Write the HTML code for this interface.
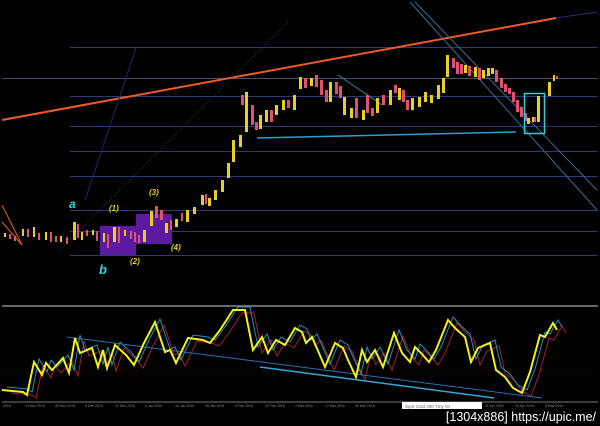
<!DOCTYPE html>
<html><head><meta charset="utf-8"><style>
html,body{margin:0;padding:0;background:#000;}
body{width:600px;height:426px;overflow:hidden;position:relative;font-family:"Liberation Sans",sans-serif;}
svg{position:absolute;left:0;top:0;}
</style></head><body>
<svg width="600" height="426" viewBox="0 0 600 426" xmlns="http://www.w3.org/2000/svg">
<rect width="600" height="426" fill="#000"/>
<!-- grid -->
<g stroke="#2c3a78" stroke-width="1">
<line x1="70" y1="47.5" x2="598" y2="47.5"/>
<line x1="70" y1="96.5" x2="598" y2="96.5"/>
<line x1="70" y1="126.5" x2="598" y2="126.5"/>
<line x1="70" y1="151.5" x2="598" y2="151.5"/>
<line x1="70" y1="176.5" x2="598" y2="176.5"/>
<line x1="70" y1="210.5" x2="598" y2="210.5"/>
<line x1="70" y1="231.5" x2="598" y2="231.5"/>
<line x1="70" y1="255.5" x2="598" y2="255.5"/>
</g>
<line x1="2" y1="78.5" x2="598" y2="78.5" stroke="#4a4f68"/>
<!-- trend lines -->
<line x1="2" y1="120" x2="556" y2="18" stroke="#f05a28" stroke-width="2"/>
<line x1="556" y1="18" x2="597" y2="12" stroke="#2a2a80" stroke-width="1"/>
<line x1="85" y1="200" x2="136" y2="48" stroke="#1a2a70" stroke-width="1"/>
<line x1="60" y1="250" x2="288" y2="22" stroke="#3a3a5a" stroke-width="1" stroke-dasharray="1,2"/>
<line x1="257" y1="138" x2="516" y2="132" stroke="#2aa0d0" stroke-width="1.5"/>
<line x1="338" y1="75" x2="382" y2="105" stroke="#3a80a0" stroke-width="1"/>
<line x1="410" y1="2" x2="597" y2="210" stroke="#3a6a90" stroke-width="1"/>
<line x1="415" y1="2" x2="597" y2="190" stroke="#3a6a90" stroke-width="1"/>
<line x1="2" y1="205" x2="22" y2="245" stroke="#e06020"/>
<line x1="2" y1="222" x2="22" y2="245" stroke="#e06020"/>
<!-- purple boxes -->
<rect x="100" y="226" width="36" height="29" fill="#5c1aa0"/>
<rect x="136" y="214" width="36" height="30" fill="#5c1aa0"/>
<!-- candles -->
<g id="c">
<g fill="#e8d020">
<rect x="4" y="233" width="2" height="4"/><rect x="22" y="229" width="2" height="7"/><rect x="33" y="227" width="2" height="10"/><rect x="45" y="232" width="2" height="8"/><rect x="60" y="236" width="2" height="6"/><rect x="73" y="222" width="3" height="18"/><rect x="81" y="232" width="2" height="8"/><rect x="92" y="230" width="2" height="5"/><rect x="103" y="233" width="2" height="9"/><rect x="113" y="227" width="3" height="15"/><rect x="124" y="230" width="2" height="6"/><rect x="143" y="230" width="3" height="12"/><rect x="150" y="211" width="3" height="15"/><rect x="165" y="223" width="3" height="10"/><rect x="175" y="219" width="3" height="8"/><rect x="186" y="210" width="3" height="12"/><rect x="193" y="207" width="3" height="7"/><rect x="201" y="195" width="3" height="10"/><rect x="208" y="198" width="3" height="8"/><rect x="214" y="190" width="3" height="10"/><rect x="221" y="180" width="3" height="12"/><rect x="227" y="163" width="3" height="15"/><rect x="232" y="140" width="3" height="22"/><rect x="239" y="135" width="3" height="12"/><rect x="245" y="92" width="3" height="40"/><rect x="259" y="115" width="3" height="14"/><rect x="265" y="110" width="3" height="12"/><rect x="275" y="105" width="3" height="10"/><rect x="282" y="100" width="3" height="10"/><rect x="293" y="95" width="3" height="15"/><rect x="299" y="77" width="3" height="12"/><rect x="310" y="78" width="3" height="8"/><rect x="329" y="82" width="3" height="20"/><rect x="343" y="97" width="3" height="18"/><rect x="350" y="108" width="3" height="10"/><rect x="362" y="110" width="3" height="10"/><rect x="376" y="98" width="3" height="15"/><rect x="389" y="90" width="3" height="15"/><rect x="398" y="88" width="3" height="12"/><rect x="411" y="98" width="3" height="12"/><rect x="418" y="97" width="3" height="10"/><rect x="424" y="92" width="3" height="10"/><rect x="430" y="95" width="3" height="8"/><rect x="437" y="85" width="3" height="14"/><rect x="442" y="78" width="3" height="15"/><rect x="446" y="55" width="3" height="22"/><rect x="464" y="65" width="3" height="8"/><rect x="474" y="67" width="3" height="10"/><rect x="482" y="70" width="3" height="8"/><rect x="487" y="68" width="3" height="8"/><rect x="491" y="68" width="3" height="6"/><rect x="527" y="118" width="3" height="6"/><rect x="532" y="117" width="2" height="5"/><rect x="537" y="96" width="3" height="26"/><rect x="548" y="82" width="3" height="14"/><rect x="553" y="75" width="2" height="6"/>
</g>
<g fill="#e05070">
<rect x="9" y="234" width="2" height="5"/><rect x="14" y="236" width="2" height="5"/><rect x="27" y="229" width="2" height="8"/><rect x="38" y="233" width="2" height="7"/><rect x="50" y="232" width="2" height="10"/><rect x="55" y="236" width="2" height="6"/><rect x="66" y="237" width="2" height="7"/><rect x="77" y="224" width="2" height="14"/><rect x="86" y="230" width="2" height="6"/><rect x="96" y="231" width="2" height="10"/><rect x="107" y="234" width="2" height="14"/><rect x="118" y="227" width="2" height="16"/><rect x="130" y="231" width="2" height="8"/><rect x="134" y="232" width="2" height="10"/><rect x="138" y="235" width="2" height="8"/><rect x="155" y="206" width="3" height="12"/><rect x="160" y="210" width="3" height="10"/><rect x="170" y="220" width="2" height="10"/><rect x="181" y="213" width="2" height="8"/><rect x="205" y="194" width="2" height="10"/><rect x="241" y="95" width="3" height="10"/><rect x="251" y="105" width="3" height="20"/><rect x="255" y="122" width="3" height="8"/><rect x="270" y="110" width="3" height="12"/><rect x="287" y="100" width="3" height="8"/><rect x="304" y="78" width="3" height="10"/><rect x="315" y="75" width="3" height="12"/><rect x="320" y="80" width="3" height="15"/><rect x="325" y="90" width="3" height="12"/><rect x="335" y="82" width="3" height="12"/><rect x="339" y="86" width="3" height="12"/><rect x="355" y="98" width="3" height="20"/><rect x="366" y="95" width="3" height="18"/><rect x="371" y="108" width="3" height="8"/><rect x="382" y="95" width="3" height="10"/><rect x="394" y="85" width="3" height="8"/><rect x="402" y="90" width="3" height="12"/><rect x="406" y="100" width="3" height="10"/><rect x="452" y="58" width="3" height="10"/><rect x="456" y="62" width="3" height="12"/><rect x="460" y="64" width="3" height="10"/><rect x="468" y="66" width="3" height="10"/><rect x="478" y="68" width="3" height="12"/><rect x="495" y="70" width="3" height="12"/><rect x="500" y="78" width="3" height="10"/><rect x="504" y="84" width="3" height="8"/><rect x="508" y="88" width="3" height="6"/><rect x="512" y="92" width="3" height="10"/><rect x="516" y="100" width="3" height="12"/><rect x="520" y="107" width="3" height="10"/><rect x="524" y="113" width="3" height="8"/><rect x="534" y="117" width="2" height="5"/><rect x="556" y="76" width="2" height="3"/>
</g>
</g>
<rect x="524.5" y="93.5" width="20" height="40" fill="none" stroke="#30d0d8" stroke-width="1.5"/>
<!-- labels -->
<g font-style="italic" font-weight="bold" font-family="Liberation Sans,sans-serif">
<text x="69" y="208" fill="#30d8e0" font-size="12">a</text>
<text x="99" y="274" fill="#30d8e0" font-size="13">b</text>
<text x="109" y="211" fill="#e8d020" font-size="8">(1)</text>
<text x="149" y="195" fill="#e8d020" font-size="8">(3)</text>
<text x="130" y="264" fill="#e8d020" font-size="8">(2)</text>
<text x="171" y="250" fill="#e8d020" font-size="8">(4)</text>
</g>
<!-- oscillator panel -->
<line x1="2" y1="306" x2="598" y2="306" stroke="#888" stroke-width="1.5"/>
<line x1="2" y1="402" x2="598" y2="402" stroke="#777" stroke-width="1"/>
<line x1="2" y1="371" x2="598" y2="371" stroke="#3a1010" stroke-dasharray="1,2"/>
<defs>
<polyline id="osc" fill="none" points="2,390 23,392 27,395 34,362 42,375 46,363 52,370 63,358 69,373 75,338 80,353 92,348 98,367 103,350 107,368 115,345 126,355 134,365 144,343 155,322 165,352 170,350 176,363 188,338 203,340 210,343 220,330 233,310 245,310 253,350 262,337 268,353 276,340 285,345 295,328 302,332 306,343 312,337 325,367 335,343 343,348 348,360 356,377 362,350 367,362 375,350 383,367 394,333 402,353 410,362 415,347 421,353 429,362 436,350 448,320 455,328 465,337 471,362 478,348 490,343 496,370 505,377 513,388 522,393 530,372 540,335 545,337 553,323 557,330"/>
</defs>
<use href="#osc" transform="translate(9,3)" stroke="#a02030" stroke-width="1"/>
<use href="#osc" transform="translate(5,-3)" stroke="#2890b0" stroke-width="1"/>
<line x1="67" y1="337" x2="542" y2="398" stroke="#2a70b0" stroke-width="1"/>
<line x1="260" y1="367" x2="494" y2="398" stroke="#30a8d8" stroke-width="1.5"/>
<use href="#osc" stroke="#f0f020" stroke-width="2"/>
<!-- axis labels -->
<g fill="#888" font-size="3.5">
<text x="3" y="407">2015</text><text x="25" y="407">13 Nov 2015</text><text x="55" y="407">26 Nov 2015</text><text x="85" y="407">8 Dec 2015</text><text x="115" y="407">21 Dec 2015</text><text x="145" y="407">4 Jan 2016</text><text x="175" y="407">15 Jan 2016</text><text x="205" y="407">28 Jan 2016</text><text x="235" y="407">9 Feb 2016</text><text x="265" y="407">22 Feb 2016</text><text x="295" y="407">4 Mar 2016</text><text x="325" y="407">17 Mar 2016</text><text x="355" y="407">30 Mar 2016</text><text x="485" y="407">11 Apr 2016</text><text x="515" y="407">22 Apr 2016</text><text x="545" y="407">5 May 2016</text>
</g>
<rect x="402" y="402" width="80" height="7" fill="#fff"/>
<text x="405" y="408" fill="#666" font-size="4.5">Spot Gold 200 Tmy Ot</text>
<text x="596" y="421" fill="#fff" font-size="12.5" text-anchor="end" font-family="Liberation Sans,sans-serif">[1304x886] https://upic.me/</text>
</svg>
</body></html>
